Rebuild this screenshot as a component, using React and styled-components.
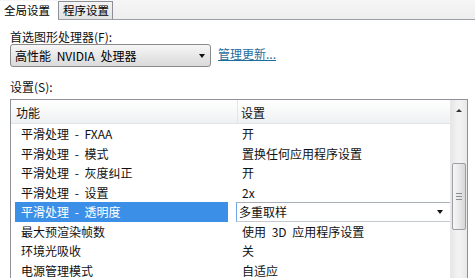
import React from 'react'
import styled, { createGlobalStyle } from 'styled-components'

const GlobalStyle = createGlobalStyle`
  html, body {
    margin: 0;
    padding: 0;
    background: #fff;
    overflow: hidden;
  }
  body {
    width: 475px;
    height: 278px;
    font-family: "Noto Sans CJK SC", "Noto Sans", sans-serif;
    font-size: 12px;
    color: #111;
  }
`

const Page = styled.div`
  width: 475px;
  height: 278px;
  overflow: hidden;
  background: #fff;
`

const TabBar = styled.div`
  display: flex;
  align-items: flex-end;
  height: 19px;
  border-bottom: 1px solid #9aa0a6;
  background: linear-gradient(#f6f6f6, #eeeeee);
`

const Tab = styled.div`
  height: ${p => (p.$active ? '19px' : '17px')};
  line-height: ${p => (p.$active ? '19px' : '17px')};
  padding: ${p => (p.$active ? '0 8px 0 4px' : '0 3px 0 4px')};
  margin-bottom: ${p => (p.$active ? '-1px' : '0')};
  background: ${p =>
    p.$active ? '#fff' : 'linear-gradient(#f4f4f4, #e2e2e2)'};
  border: ${p => (p.$active ? 'none' : '1px solid #8c8f95')};
  border-bottom: none;
  font-size: 11.5px;
  color: #000;
`

const Body = styled.div`
  padding: 10px 0 0 10px;
`

const Label = styled.div`
  line-height: 14px;
  font-size: 12px;
  color: #111;
`

const GpuRow = styled.div`
  display: flex;
  align-items: flex-start;
  gap: 7px;
  margin-bottom: 13px;
`

const Select = styled.div`
  width: 195px;
  height: 21px;
  border: 1px solid #8a8a8a;
  border-radius: 3px;
  background: linear-gradient(#f7f7f7, #e6e6e6 55%, #dadada);
  display: flex;
  align-items: center;
  padding-left: 4px;
  font-size: 12px;
  word-spacing: 3px;
  color: #000;
`

const SelectText = styled.span`
  flex: 1;
  white-space: pre;
`

const Arrow = styled.span`
  width: 0;
  height: 0;
  border-left: 3.5px solid transparent;
  border-right: 3.5px solid transparent;
  border-top: 4px solid #111;
  margin-right: ${p => p.$right || 6}px;
`

const Link = styled.a`
  margin-top: 3px;
  color: #1f6c9e;
  text-decoration: underline;
  font-size: 12px;
  line-height: 14px;
`

const ListBox = styled.div`
  margin-top: 5px;
  width: 456px;
  height: 200px;
  border: 1px solid #8e9298;
  display: flex;
`

const Table = styled.div`
  flex: 1;
  display: flex;
  flex-direction: column;
`

const Header = styled.div`
  display: flex;
  height: 23px;
  border-bottom: 1px solid #e2e3e5;
  background: linear-gradient(#ffffff, #f6f7f8 60%, #eef0f2);
`

const HeaderCell = styled.div`
  width: ${p => (p.$first ? '221px' : 'auto')};
  flex: ${p => (p.$first ? 'none' : '1')};
  padding: 4px 0 0 ${p => (p.$first ? 5 : 3)}px;
  line-height: 18px;
  border-right: ${p => (p.$first ? '1px solid #e4e5e7' : 'none')};
  color: #111;
`

const Row = styled.div`
  display: flex;
  height: 19.5px;
  line-height: 19.5px;
  word-spacing: 3px;
`

const NameCell = styled.div`
  width: 221px;
  padding: 0 4px;
  box-sizing: border-box;
  display: flex;
`

const NameText = styled.div`
  flex: 1;
  padding-left: 6px;
  background: ${p => (p.$selected ? '#3b8fe6' : 'transparent')};
  color: ${p => (p.$selected ? '#fff' : '#111')};
  white-space: pre;
`

const ValueCell = styled.div`
  flex: 1;
  padding-left: 10px;
  color: #111;
  white-space: pre;
`

const Combo = styled.div`
  flex: 1;
  margin-left: 4px;
  display: flex;
  align-items: center;
  padding-left: 2px;
  border-top: 1px solid #a9b0b8;
  border-bottom: 1px solid #c5cad0;
  border-left: 1px solid #6ea6e4;
  box-sizing: border-box;
  background: #fff;
  color: #111;
`

const ScrollBar = styled.div`
  width: 16px;
  display: flex;
  flex-direction: column;
  align-items: center;
  background: linear-gradient(90deg, #e6e6e6, #f2f2f2 40%, #f2f2f2 60%, #e8e8e8);
  border-left: 1px solid #e8e8e8;
`

const ScrollButton = styled.div`
  height: 17px;
  width: 100%;
  display: flex;
  align-items: center;
  justify-content: center;
`

const UpArrow = styled.span`
  width: 0;
  height: 0;
  border-left: 3px solid transparent;
  border-right: 3px solid transparent;
  border-bottom: 3px solid #333;
  margin-top: 4px;
`

const Thumb = styled.div`
  margin-top: 46px;
  width: 14px;
  height: 67px;
  box-sizing: border-box;
  border: 1px solid #9c9fa3;
  border-radius: 2px;
  background: linear-gradient(90deg, #f6f6f6, #e9e9e9 50%, #d6d6d6);
  display: flex;
  flex-direction: column;
  align-items: center;
  justify-content: center;
  gap: 2px;
`

const Grip = styled.span`
  width: 6px;
  height: 1px;
  background: #8a8d91;
`

const rows = [
  ['平滑处理 - FXAA', '开'],
  ['平滑处理 - 模式', '置换任何应用程序设置'],
  ['平滑处理 - 灰度纠正', '开'],
  ['平滑处理 - 设置', '2x'],
  ['平滑处理 - 透明度', '多重取样', true],
  ['最大预渲染帧数', '使用 3D 应用程序设置'],
  ['环境光吸收', '关'],
  ['电源管理模式', '自适应']
]

export default function App() {
  return (
    <Page>
      <GlobalStyle />
      <TabBar>
        <Tab $active>全局设置</Tab>
        <Tab>程序设置</Tab>
      </TabBar>
      <Body>
        <Label>首选图形处理器(F):</Label>
        <GpuRow>
          <Select>
            <SelectText>高性能 NVIDIA 处理器</SelectText>
            <Arrow $right={5} />
          </Select>
          <Link>管理更新...</Link>
        </GpuRow>
        <Label>设置(S):</Label>
        <ListBox>
          <Table>
            <Header>
              <HeaderCell $first>功能</HeaderCell>
              <HeaderCell>设置</HeaderCell>
            </Header>
            {rows.map(([name, value, selected]) => (
              <Row key={name}>
                <NameCell>
                  <NameText $selected={selected}>{name}</NameText>
                </NameCell>
                {selected ? (
                  <Combo>
                    <SelectText>{value}</SelectText>
                    <Arrow $right={7} />
                  </Combo>
                ) : (
                  <ValueCell>{value}</ValueCell>
                )}
              </Row>
            ))}
          </Table>
          <ScrollBar>
            <ScrollButton>
              <UpArrow />
            </ScrollButton>
            <Thumb>
              <Grip />
              <Grip />
              <Grip />
            </Thumb>
          </ScrollBar>
        </ListBox>
      </Body>
    </Page>
  )
}
